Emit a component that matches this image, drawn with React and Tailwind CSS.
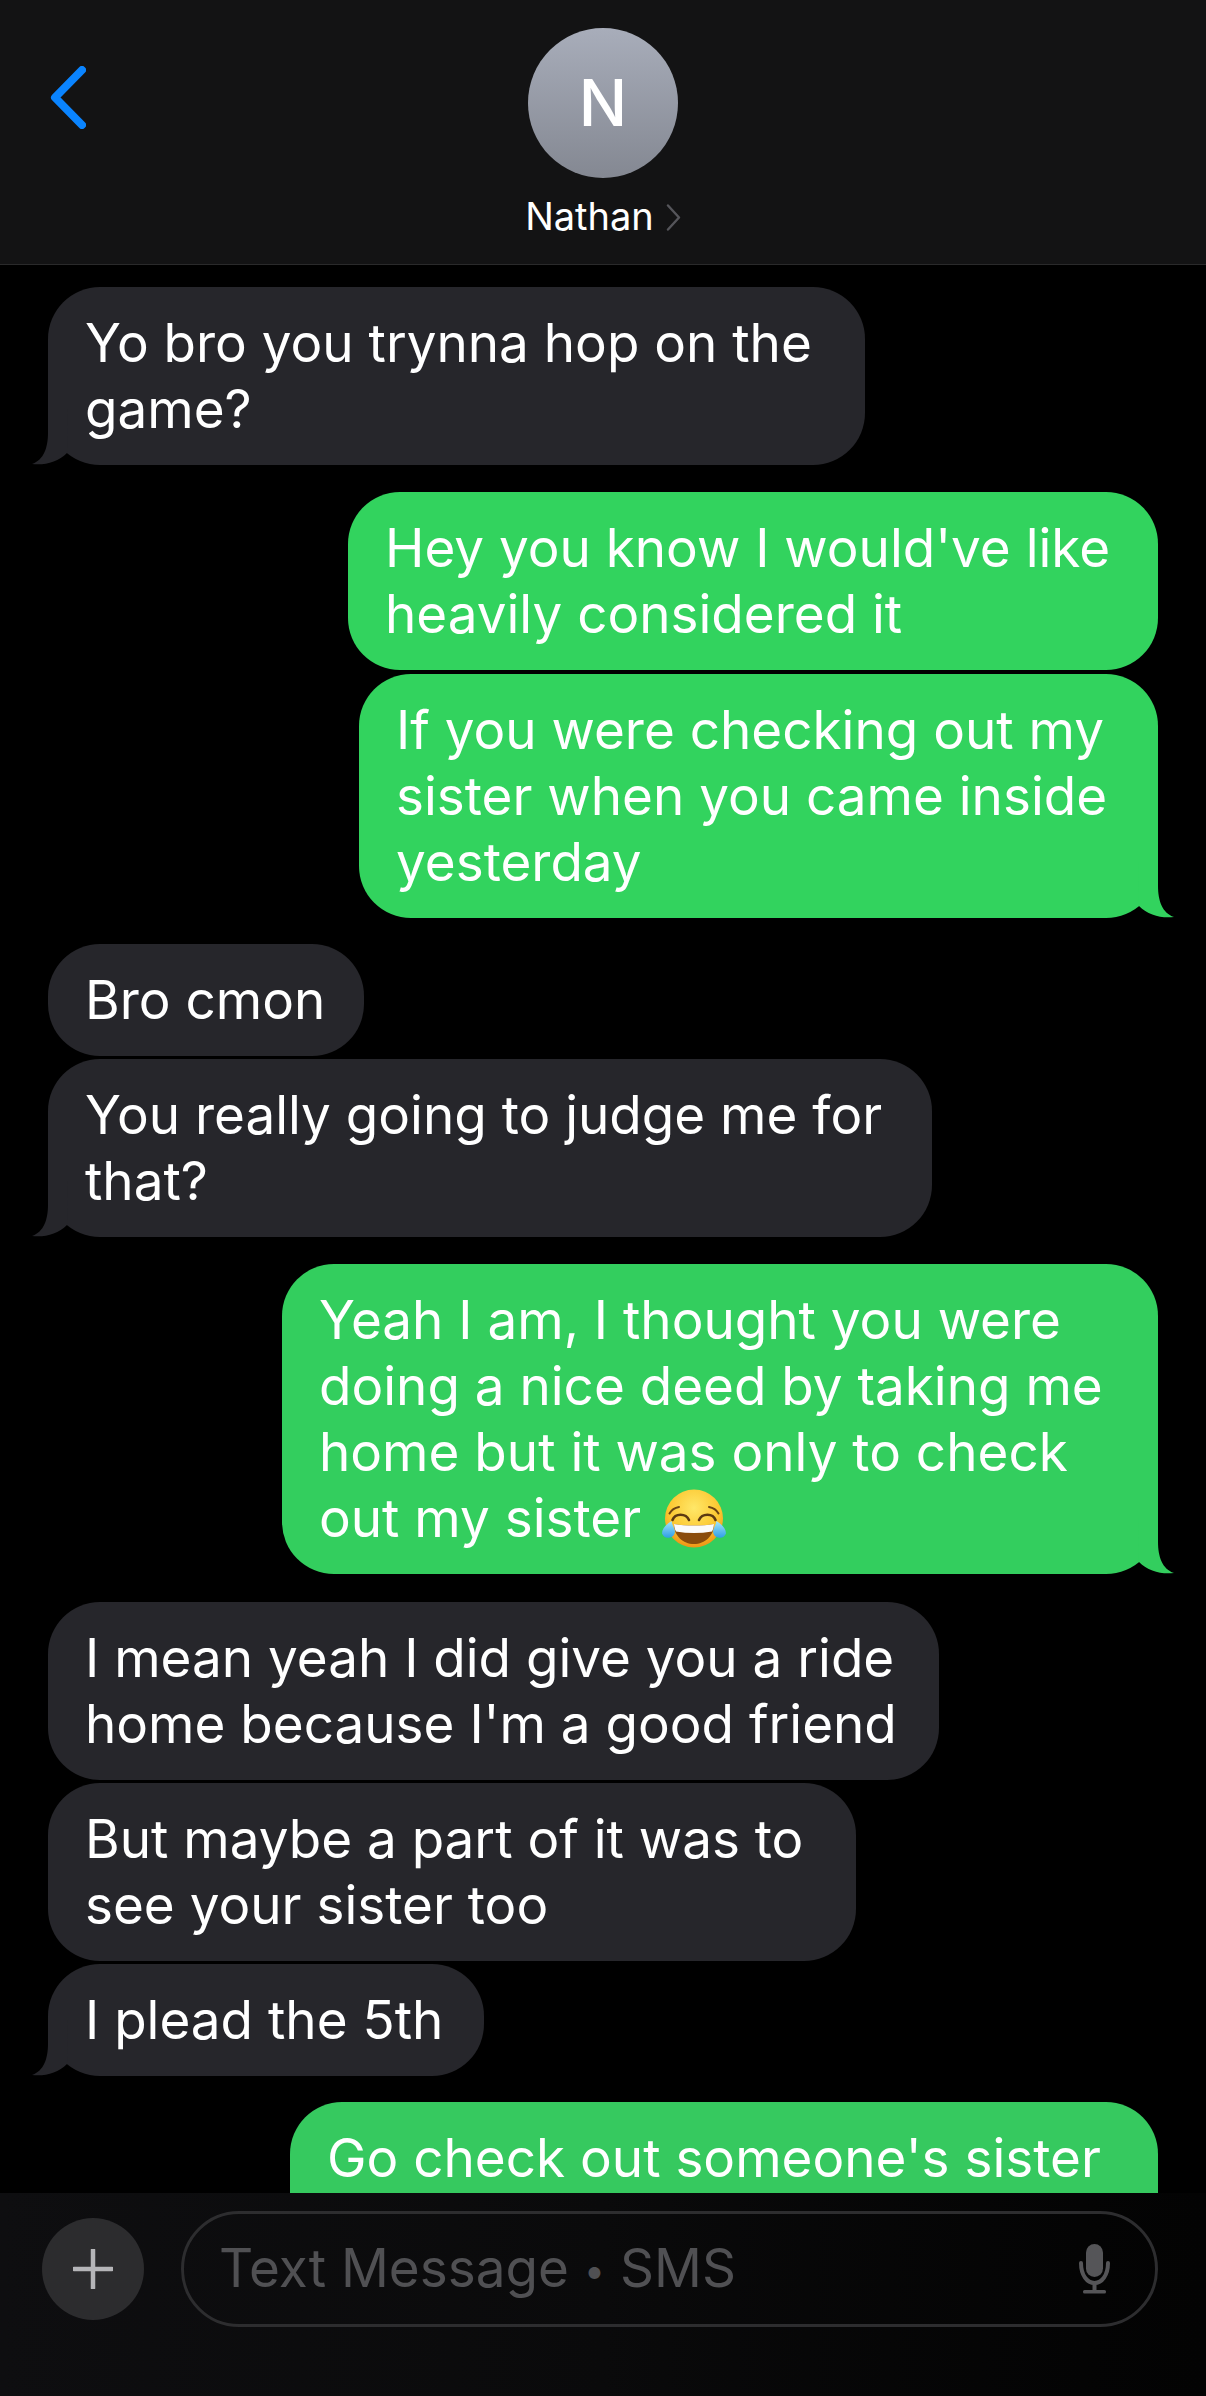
import React from "react";

const messages = [
  { from: "them", lines: ["Yo bro you trynna hop on the", "game?"], tail: true, gap: "mt-0", width: "w-[817px]" },
  { from: "me", color: "bg-[#32d35e]", fill: "fill-[#32d35e]", lines: ["Hey you know I would've like", "heavily considered it"], gap: "mt-[27px]", width: "w-[810px]" },
  { from: "me", color: "bg-[#32d35e]", fill: "fill-[#32d35e]", lines: ["If you were checking out my", "sister when you came inside", "yesterday"], tail: true, gap: "mt-[4px]", width: "w-[799px]" },
  { from: "them", lines: ["Bro cmon"], gap: "mt-[26px]", width: "w-[316px]" },
  { from: "them", lines: ["You really going to judge me for", "that?"], tail: true, gap: "mt-[3px]", width: "w-[884px]" },
  { from: "me", color: "bg-[#33ce5e]", fill: "fill-[#33ce5e]", lines: ["Yeah I am, I thought you were", "doing a nice deed by taking me", "home but it was only to check", "out my sister"], emoji: true, tail: true, gap: "mt-[27px]", width: "w-[876px]" },
  { from: "them", lines: ["I mean yeah I did give you a ride", "home because I'm a good friend"], gap: "mt-[28px]", width: "w-[891px]" },
  { from: "them", lines: ["But maybe a part of it was to", "see your sister too"], gap: "mt-[3px]", width: "w-[808px]" },
  { from: "them", lines: ["I plead the 5th"], tail: true, gap: "mt-[3px]", width: "w-[436px]" },
  { from: "me", color: "bg-[#36c95f]", fill: "fill-[#36c95f]", lines: ["Go check out someone's sister"], gap: "mt-[26px]", width: "w-[868px]", extra: "pb-[80px]" },
];

const LaughEmoji = () => (
  <svg viewBox="0 0 64 60" className="inline-block w-[64px] h-[60px] ml-[21px] align-[-12px]">
    <defs>
      <radialGradient id="face" cx="50%" cy="32%" r="68%">
        <stop offset="0%" stopColor="#ffe768" />
        <stop offset="65%" stopColor="#fcc730" />
        <stop offset="100%" stopColor="#ee9416" />
      </radialGradient>
      <linearGradient id="drop" x1="0" y1="0" x2="0" y2="1">
        <stop offset="0%" stopColor="#a5e6fb" />
        <stop offset="100%" stopColor="#2f9fe6" />
      </linearGradient>
    </defs>
    <circle cx="32" cy="29.5" r="29" fill="url(#face)" />
    {/* brows */}
    <path d="M7.5 24.5C9.5 21 13 18.7 17 18" fill="none" stroke="#6b4413" strokeWidth="2" strokeLinecap="round" />
    <path d="M56.5 24.5C54.5 21 51 18.7 47 18" fill="none" stroke="#6b4413" strokeWidth="2" strokeLinecap="round" />
    {/* eyes */}
    <path d="M10.5 31C13 24 24 24 27 31" fill="none" stroke="#5d3a12" strokeWidth="2.6" strokeLinecap="round" />
    <path d="M37 31C40 24 51 24 53.5 31" fill="none" stroke="#5d3a12" strokeWidth="2.6" strokeLinecap="round" />
    {/* mouth */}
    <path d="M12 35C24 37 40 37 52 35C52 47 43 55 32 55S12 47 12 35Z" fill="#8a4c0c" />
    <path d="M12 35C24 37 40 37 52 35C51.8 38 51 40.5 50 42.5C38 44.5 26 44.5 14 42.5C13 40.5 12.2 38 12 35Z" fill="#fbfbfb" />
    {/* tears */}
    <path d="M9.5 32C10.5 37 13 40 13 43A6.8 6.8 0 0 1 0 44.5C0 39 5 35 9.5 32Z" fill="url(#drop)" />
    <path d="M54.5 32C53.5 37 51 40 51 43A6.8 6.8 0 0 0 64 44.5C64 39 59 35 54.5 32Z" fill="url(#drop)" />
  </svg>
);

const TailLeft = () => (
  <svg viewBox="0 0 36 56" className="absolute left-[-16px] bottom-0 w-[36px] h-[56px]">
    <path d="M16 0L16 24C16 38 12 51 0 55C13 56.5 26 53 35 44L36 0Z" fill="#26262b" />
  </svg>
);

const TailRight = ({ fill }) => (
  <svg viewBox="0 0 36 56" className="absolute right-[-16px] bottom-0 w-[36px] h-[56px]">
    <path d="M20 0L20 24C20 38 24 51 36 55C23 56.5 10 53 1 44L0 0Z" className={fill} />
  </svg>
);

const Bubble = ({ msg }) => {
  const mine = msg.from === "me";
  return (
    <div
      className={`relative shrink-0 ${msg.width} ${msg.gap} ${msg.extra || ""} ${
        mine ? `self-end ${msg.color}` : "self-start bg-[#26262b]"
      } rounded-[52px] px-[37px] py-[23px] text-white text-[53px] leading-[66px] whitespace-nowrap`}
    >
      {msg.lines.map((line, i) => (
        <div key={i} className="h-[66px]">
          {line}
          {msg.emoji && i === msg.lines.length - 1 && <LaughEmoji />}
        </div>
      ))}
      {msg.tail && (mine ? <TailRight fill={msg.fill} /> : <TailLeft />)}
    </div>
  );
};

export default function App() {
  return (
    <div className="w-[1206px] h-[2396px] bg-black flex flex-col overflow-hidden font-['Inter','Liberation_Sans',sans-serif]">
      {/* HEADER */}
      <header className="relative h-[265px] shrink-0 bg-[#131314] border-b border-[#2a2a2b] flex flex-col items-center pt-[28px]">
        <svg viewBox="0 0 36 63" className="absolute left-[50px] top-[66px] w-[36px] h-[63px]">
          <path d="M32 4 L5 31.5 L32 59" fill="none" stroke="#0a84ff" strokeWidth="8" strokeLinecap="round" strokeLinejoin="round" />
        </svg>
        <div className="w-[150px] h-[150px] rounded-full bg-gradient-to-b from-[#a8adba] to-[#848892] flex items-center justify-center text-white text-[64px] font-medium leading-none">
          N
        </div>
        <div className="flex items-center mt-[15px] text-white text-[38px] leading-[46px]">
          <span>Nathan</span>
          <svg viewBox="0 0 15 27" className="w-[15px] h-[27px] ml-[12px] mt-[2px]">
            <path d="M2 1.5 L13 13.5 L2 25.5" fill="none" stroke="#55555a" strokeWidth="2.4" strokeLinecap="round" strokeLinejoin="round" />
          </svg>
        </div>
      </header>

      {/* MESSAGES */}
      <main className="flex-1 min-h-0 overflow-hidden flex flex-col px-[48px] pt-[22px]">
        {messages.map((msg, i) => (
          <Bubble key={i} msg={msg} />
        ))}
      </main>

      {/* COMPOSER */}
      <footer className="relative h-[203px] shrink-0 bg-gradient-to-r from-[#0e0e10] via-[#0a0a0b] to-[#030303] flex items-start pl-[42px] pr-[48px] pt-[18px] gap-[37px]">
        <div className="w-[102px] h-[102px] mt-[7px] rounded-full bg-[#2c2c2e] flex items-center justify-center">
          <svg viewBox="0 0 40 40" className="w-[40px] h-[40px]">
            <path d="M20 1v38M1 20h38" stroke="#b5b5b8" strokeWidth="4.5" strokeLinecap="round" />
          </svg>
        </div>
        <div className="flex-1 h-[116px] rounded-[58px] border-[3px] border-[#2d2d2f] flex items-center justify-between pl-[35px] pr-[42px]">
          <span className="text-[#505053] text-[53px] leading-[66px]">
            Text Message <span className="text-[38px] align-[3px]">•</span> SMS
          </span>
          <svg viewBox="0 0 36 50" className="w-[36px] h-[50px]">
            <rect x="9" y="0" width="17" height="33" rx="8.5" fill="#555558" />
            <path d="M4 19C4 31 10 39 17.5 39S31 31 31 19" fill="none" stroke="#555558" strokeWidth="4" strokeLinecap="round" />
            <path d="M17.5 39v8" stroke="#555558" strokeWidth="4" />
            <rect x="6" y="46" width="23" height="3.5" rx="1.5" fill="#555558" />
          </svg>
        </div>
      </footer>
    </div>
  );
}
